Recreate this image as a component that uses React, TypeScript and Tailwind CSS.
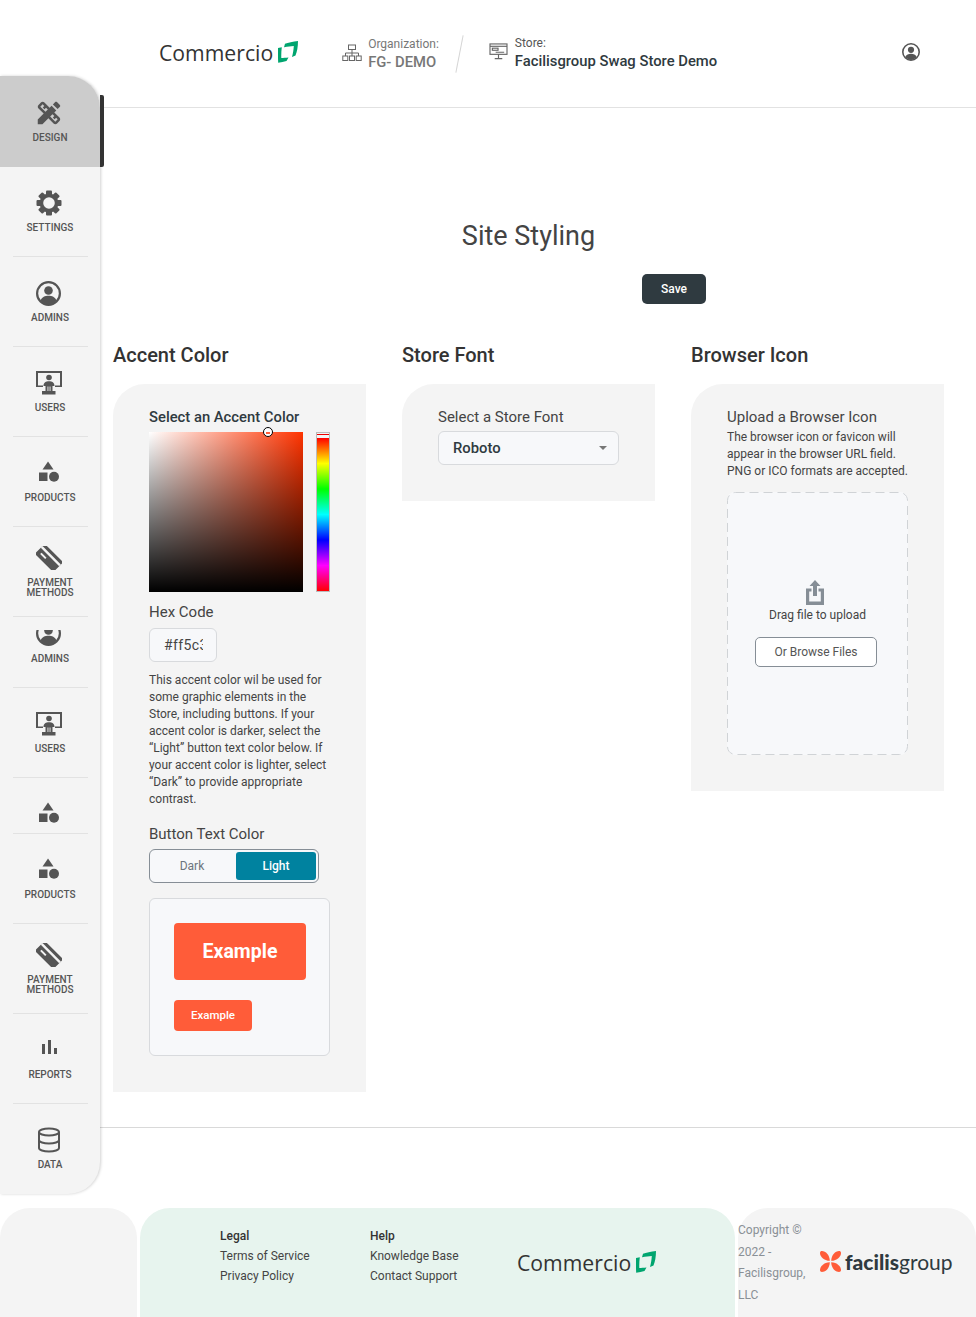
import React from 'react';
import { MdDesignServices } from 'react-icons/md';

const LogoMark = ({ className }: { className?: string }) => (
  <svg viewBox="0 0 20 22" className={className} fill="#00a56f">
    <path d="M7 2.8C10 1.5 15 0.8 20 0C20 6 19 11 17.5 14.5L14 16C15 12 15.6 9 15.8 5C12.5 5.2 10 5.5 6 6.2Z" />
    <path d="M0 7L3.8 6.2C3.3 10 3.2 13.5 3.3 17C5.5 17 7.5 16.8 10.5 16.5L8.5 20C6 20.8 3 21.4 0.2 21.8C-0.1 17 -0.1 12 0 7Z" />
  </svg>
);

const Logo = ({ className }: { className?: string }) => (
  <div className={`flex items-center gap-[5px] ${className ?? ''}`}>
    <span className="font-['Open_Sans',sans-serif] text-[21.2px] leading-none text-[#333]">Commercio</span>
    <LogoMark className="w-[20px] h-[22px] -mt-[2px]" />
  </div>
);

const AccountIcon = ({ className }: { className?: string }) => (
  <svg viewBox="0 0 25 25" className={className}>
    <circle cx="12.5" cy="12.5" r="11.4" fill="none" stroke="#555" strokeWidth="2.2" />
    <circle cx="12.5" cy="9.5" r="4.3" fill="#555" />
    <path d="M4.5 19.5C6 16 9 14.8 12.5 14.8S19 16 20.5 19.5C18.5 22 15.5 23.5 12.5 23.5S6.5 22 4.5 19.5Z" fill="#555" />
  </svg>
);

const GearIcon = () => (
  <svg viewBox="0 0 26 26" className="w-[26px] h-[26px]" fill="#555">
    <circle cx="13" cy="13" r="7.6" fill="none" stroke="#555" strokeWidth="3.6" />
    {[0, 45, 90, 135, 180, 225, 270, 315].map((deg) => (
      <rect key={deg} x="10" y="0.5" width="6" height="5" rx="1" transform={`rotate(${deg} 13 13)`} />
    ))}
  </svg>
);

const UsersIcon = () => (
  <svg viewBox="0 0 26 24" className="w-[26px] h-[24px]" fill="#555">
    <path fillRule="evenodd" d="M0 0H26V16H19V14.5H24V2H2V14.5H7V16H0Z" />
    <circle cx="13" cy="6.5" r="2.8" />
    <path d="M7.5 15C7.5 11.5 10 10.2 13 10.2S18.5 11.5 18.5 15H16.5V20H19.5V23.5H6V20H9.5V15Z" />
    <path d="M11.5 15.5H12.4V20H11.5ZM13.6 15.5H14.5V20H13.6Z" fill="#f4f4f4" />
  </svg>
);

const ProductsIcon = () => (
  <svg viewBox="0 0 22 22" className="w-[22px] h-[22px] mb-[2px]" fill="#555">
    <path d="M10 0.5L15.5 8.5H4.5Z" />
    <rect x="1" y="11.5" width="8.5" height="8.5" />
    <circle cx="16" cy="15.8" r="5" />
  </svg>
);

const PaymentIcon = () => (
  <svg viewBox="0 0 26 24" className="w-[26px] h-[24px]">
    <g transform="rotate(45 13 12)">
      <rect x="0" y="5" width="26" height="14" rx="1.5" fill="#555" />
      <rect x="0" y="8.2" width="26" height="2.4" fill="#f4f4f4" />
      <rect x="4" y="13.5" width="7" height="2" fill="#f4f4f4" />
    </g>
  </svg>
);

const ReportsIcon = () => (
  <svg viewBox="0 0 15 14" className="w-[15px] h-[14px] mt-[3px] mb-[9px] ml-[1px]" fill="#555">
    <rect x="0" y="4" width="3" height="10" />
    <rect x="6" y="0" width="3" height="14" />
    <rect x="12" y="8" width="3" height="6" />
  </svg>
);

const DataIcon = () => (
  <svg viewBox="0 0 24 26" className="w-[24px] h-[26px]" fill="none" stroke="#555" strokeWidth="2">
    <ellipse cx="12" cy="5" rx="10" ry="3.5" />
    <path d="M2 5V21C2 23 6.5 24.5 12 24.5S22 23 22 21V5" />
    <path d="M2 13C2 15 6.5 16.5 12 16.5S22 15 22 13" />
  </svg>
);

const OrgIcon = () => (
  <svg viewBox="0 0 20 18" className="w-[20px] h-[18px]" fill="none" stroke="#666" strokeWidth="1">
    <rect x="6.5" y="1" width="7" height="4.5" />
    <path d="M10 5.5V9M3.5 12V9H16.5V12M10 9V12" />
    <rect x="0.8" y="12" width="5" height="4.5" />
    <rect x="7.5" y="12" width="5" height="4.5" />
    <rect x="14.2" y="12" width="5" height="4.5" />
  </svg>
);

const StoreIcon = () => (
  <svg viewBox="0 0 20 18" className="w-[19px] h-[17px]" fill="none" stroke="#666" strokeWidth="1.2">
    <rect x="1" y="1" width="18" height="11" />
    <path d="M1 3.5H19" />
    <rect x="3.5" y="5.5" width="6" height="2.2" />
    <path d="M7 9.8H16M10 12V16M6 16.5H14" />
  </svg>
);

const UploadIcon = () => (
  <svg viewBox="0 0 18 25" className="w-[18px] h-[25px]" fill="#868e96">
    <path d="M9 0L14.5 6H11V16H7V6H3.5Z" />
    <path d="M0 8.5H5.5V11.5H3.2V21.5H14.8V11.5H12.5V8.5H18V25H0Z" />
  </svg>
);

const petal = 'M0 2C0 0.5 1 0 2 0C6 0 10 4 10.3 10.3C4 10 0 6 0 2Z';

const FacilisMark = () => (
  <svg viewBox="0 0 22 22" className="w-[21px] h-[21px]" fill="#ff5c39">
    <path d={petal} />
    <path d={petal} transform="matrix(-1 0 0 1 22 0)" />
    <path d={petal} transform="matrix(1 0 0 -1 0 22)" />
    <path d={petal} transform="matrix(-1 0 0 -1 22 22)" />
  </svg>
);

const adminsIcon = <AccountIcon className="w-[25px] h-[25px]" />;

const navItems = [
  { key: 'design', label: ['DESIGN'], icon: <MdDesignServices size={30} color="#555" className="-m-[2px]" />, active: true },
  { key: 'settings', label: ['SETTINGS'], icon: <GearIcon /> },
  { key: 'admins', label: ['ADMINS'], icon: adminsIcon },
  { key: 'users', label: ['USERS'], icon: <UsersIcon /> },
  { key: 'products', label: ['PRODUCTS'], icon: <ProductsIcon /> },
  { key: 'payment', label: ['PAYMENT', 'METHODS'], icon: <PaymentIcon /> },
  { key: 'admins2', label: ['ADMINS'], icon: adminsIcon, clipped: true },
  { key: 'users2', label: ['USERS'], icon: <UsersIcon /> },
  { key: 'products-short', label: [], icon: <ProductsIcon />, short: true },
  { key: 'products2', label: ['PRODUCTS'], icon: <ProductsIcon /> },
  { key: 'payment2', label: ['PAYMENT', 'METHODS'], icon: <PaymentIcon /> },
  { key: 'reports', label: ['REPORTS'], icon: <ReportsIcon /> },
  { key: 'data', label: ['DATA'], icon: <DataIcon /> },
];

const Sidebar = () => (
  <aside className="relative z-10 w-[100px] shrink-0 -mt-[32px] h-[1118px] bg-[#f4f4f4] rounded-r-[32px] shadow-[1px_0_3px_rgba(0,0,0,0.18)]">
    {navItems.map((item, i) => {
      const height = item.active ? 'h-[91px] bg-[#cccccc] rounded-tr-[32px]' : item.clipped ? 'h-[71px]' : item.short ? 'h-[56px]' : 'h-[90px]';
      const twoLine = item.label.length > 1;
      const pad = item.active ? 'pt-[24px]' : item.clipped ? 'pt-[13px]' : twoLine ? 'pt-[18px]' : 'pt-[23px]';
      const last = i === navItems.length - 1 || item.active;
      return (
        <div key={item.key} className={`relative flex flex-col items-center ${height} ${pad}`}>
          {item.active && <div className="absolute left-full top-[19px] bottom-0 w-[4px] bg-[#333] rounded-r-[2px]" />}
          {item.clipped ? (
            <div className="h-[16px] mr-[3px] flex flex-col justify-end overflow-hidden">
              <div className="shrink-0">{item.icon}</div>
            </div>
          ) : (
            <div className="h-[26px] mr-[3px] flex items-center justify-center">{item.icon}</div>
          )}
          {item.label.length > 0 && (
            <div className={`${item.clipped ? 'mt-[8px]' : 'mt-[7px]'} text-center text-[10px] leading-[10px] font-medium text-[#555]`}>
              {item.label.map((l) => (
                <div key={l}>{l}</div>
              ))}
            </div>
          )}
          {!last && <div className="absolute left-[13px] right-[12px] bottom-0 h-px bg-[#e2e2e2]" />}
        </div>
      );
    })}
  </aside>
);

const Header = () => (
  <header className="h-[108px] border-b border-[#e2e2e2] flex items-start pt-[35px] pl-[159px] pr-[56px]">
    <Logo className="mt-[7px]" />
    <div className="ml-[44px] mt-[9px]"><OrgIcon /></div>
    <div className="ml-[6px] mt-[1px] leading-none">
      <div className="text-[12px] leading-[16px] text-[#777]">Organization:</div>
      <div className="text-[14.8px] leading-[20px] font-medium text-[#777]">FG- DEMO</div>
    </div>
    <div className="ml-[20px] w-px h-[38px] bg-[#d5d5d5] rotate-[11deg]" />
    <div className="ml-[29px] mt-[8px]"><StoreIcon /></div>
    <div className="ml-[7px] leading-none">
      <div className="text-[12px] leading-[16px] text-[#555]">Store:</div>
      <div className="text-[14.8px] leading-[20px] font-medium text-[#2f3a40]">Facilisgroup Swag Store Demo</div>
    </div>
    <div className="ml-auto mt-[8px]">
      <AccountIcon className="w-[18px] h-[18px]" />
    </div>
  </header>
);

const AccentColumn = () => (
  <div className="bg-[#f4f4f4] rounded-tl-[32px] h-[708px] pl-[36px] pr-[36px] pt-[23px]">
    <div className="text-[14.8px] leading-[20px] font-medium text-[#2f3a40]">Select an Accent Color</div>
    <div className="flex mt-[5px] gap-[13px]">
      <div className="relative w-[154px] h-[160px] bg-[linear-gradient(to_top,#000,transparent),linear-gradient(to_right,#fff,#ff3300)]">
        <div className="absolute left-[114px] -top-[5px] w-[10px] h-[10px] rounded-full border border-black bg-white overflow-hidden">
          <div className="mt-[4px] mx-auto w-[4px] h-[2px] bg-[#ff5c39]" />
        </div>
      </div>
      <div className="w-[14px] h-[160px] border border-[#bbb] pt-[1px]">
        <div className="h-[1px] bg-[#e00] mb-[3px]" />
        <div className="h-[153px] bg-[linear-gradient(to_bottom,#f00,#ff0,#0f0,#0ff,#00f,#f0f,#f00)]" />
      </div>
    </div>
    <div className="mt-[10px] text-[15px] leading-[20px] text-[#444]">Hex Code</div>
    <div className="mt-[6px] w-[68px] h-[34px] border border-[#d8dadd] rounded-[6px] bg-[#f7f8fa] pl-[14px] flex items-center">
      <span className="w-[39px] overflow-hidden whitespace-nowrap text-[14px] tracking-[0.4px] text-[#444]">#ff5c39</span>
    </div>
    <p className="mt-[10px] w-[181px] text-[12px] leading-[17px] text-[#444]">
      This accent color wil be used for some graphic elements in the Store, including buttons. If your accent color is darker, select the “Light” button text color below. If your accent color is lighter, select “Dark” to provide appropriate contrast.
    </p>
    <div className="mt-[16px] text-[15px] leading-[20px] text-[#444]">Button Text Color</div>
    <div className="mt-[5px] w-[170px] h-[34px] border border-[#868e96] rounded-[6px] bg-[#f7f8fa] p-[2px] flex">
      <div className="w-[80px] mr-[4px] flex items-center justify-center text-[12px] text-[#6c757d]">Dark</div>
      <div className="w-[80px] rounded-[3px] bg-[#00829f] flex items-center justify-center text-[12px] font-medium text-white">Light</div>
    </div>
    <div className="mt-[15px] w-[181px] h-[158px] border border-[#d8dadd] rounded-[6px] bg-[#f7f8fa] pl-[24px] pt-[24px]">
      <div className="w-[132px] h-[57px] rounded-[4px] bg-[#ff5c39] flex items-center justify-center text-[19.5px] font-bold text-white">Example</div>
      <div className="mt-[20px] w-[78px] h-[31px] rounded-[4px] bg-[#ff5c39] flex items-center justify-center text-[11.5px] font-medium text-white">Example</div>
    </div>
  </div>
);

const FontColumn = () => (
  <div className="bg-[#f4f4f4] rounded-tl-[32px] h-[117px] px-[36px] pt-[23px]">
    <div className="text-[15px] leading-[20px] text-[#444]">Select a Store Font</div>
    <div className="mt-[4px] h-[34px] border border-[#d8dadd] rounded-[6px] bg-[#f7f8fa] pl-[14px] pr-[11px] flex items-center justify-between">
      <span className="pt-[1px] text-[14.8px] font-medium text-[#2f3a40]">Roboto</span>
      <span className="w-0 h-0 border-x-[4px] border-x-transparent border-t-[4px] border-t-[#777]" />
    </div>
  </div>
);

const IconColumn = () => (
  <div className="bg-[#f4f4f4] rounded-tl-[32px] h-[407px] px-[36px] pt-[23px]">
    <div className="text-[15px] leading-[20px] text-[#444]">Upload a Browser Icon</div>
    <p className="mt-[2px] text-[12px] leading-[17px] text-[#444] whitespace-nowrap">
      The browser icon or favicon will
      <br />
      appear in the browser URL field.
      <br />
      PNG or ICO formats are accepted.
    </p>
    <div className="relative mt-[12px] w-[181px] h-[263px] rounded-[8px] bg-[#f7f8fa] flex flex-col items-center pt-[88px]">
      <svg className="absolute inset-0 w-full h-full" fill="none" stroke="#d0d3d6" strokeDasharray="9 5">
        <rect x="0.5" y="0.5" width="180" height="262" rx="8" />
      </svg>
      <div className="-ml-[5px]"><UploadIcon /></div>
      <div className="mt-[2px] text-[12px] leading-[16px] text-[#444]">Drag file to upload</div>
      <div className="relative mt-[14px] -ml-[3px] w-[122px] h-[30px] border border-[#868e96] rounded-[5px] bg-white flex items-center justify-center text-[12px] text-[#555]">Or Browse Files</div>
    </div>
  </div>
);

const columns = [
  { title: 'Accent Color', body: <AccentColumn /> },
  { title: 'Store Font', body: <FontColumn /> },
  { title: 'Browser Icon', body: <IconColumn /> },
];

const Footer = () => (
  <footer className="mt-[14px] flex gap-[3px] h-[109px]">
    <div className="w-[137px] bg-[#f4f4f4] rounded-t-[30px]" />
    <div className="w-[595px] bg-[#e7f4ee] rounded-t-[30px] flex items-start pt-[18px] pl-[80px]">
      <div className="w-[150px] text-[12px] leading-[20px] text-[#444]">
        <div className="font-medium text-[#333]">Legal</div>
        <div>Terms of Service</div>
        <div>Privacy Policy</div>
      </div>
      <div className="w-[147px] text-[12px] leading-[20px] text-[#444]">
        <div className="font-medium text-[#333]">Help</div>
        <div>Knowledge Base</div>
        <div>Contact Support</div>
      </div>
      <Logo className="mt-[26px]" />
    </div>
    <div className="flex-1 bg-[#f4f4f4] rounded-t-[30px] flex items-start pt-[12px]">
      <div className="w-[73px] text-[12px] leading-[21.5px] text-[#8a9096]">Copyright © 2022 - Facilisgroup, LLC</div>
      <div className="ml-[9px] mt-[31px] flex items-center gap-[4px]">
        <FacilisMark />
        <span className="text-[21px] leading-none text-[#2f3a40] font-['Lato',sans-serif]">
          <span className="font-black">facilis</span>group
        </span>
      </div>
    </div>
  </footer>
);

const App: React.FC = () => {
  return (
    <div className="w-[976px] h-[1317px] overflow-hidden bg-white font-['Roboto',sans-serif]">
      <Header />
      <div className="flex">
        <Sidebar />
        <main className="flex-1 h-[1020px] border-b border-[#d9d9d9] pl-[13px] pr-[32px] pt-[112px]">
          <h1 className="text-center text-[27px] leading-[32px] text-[#444]">Site Styling</h1>
          <div className="flex justify-end pr-[238px] mt-[22px]">
            <div className="w-[64px] h-[30px] rounded-[5px] bg-[#2f3a40] flex items-center justify-center text-[12px] font-medium text-white">Save</div>
          </div>
          <div className="grid grid-cols-3 gap-[36px] mt-[39px]">
            {columns.map((c) => (
              <section key={c.title}>
                <h2 className="text-[20px] leading-[24px] font-medium text-[#333] mb-[17px]">{c.title}</h2>
                {c.body}
              </section>
            ))}
          </div>
        </main>
      </div>
      <Footer />
    </div>
  );
};

export default App;
